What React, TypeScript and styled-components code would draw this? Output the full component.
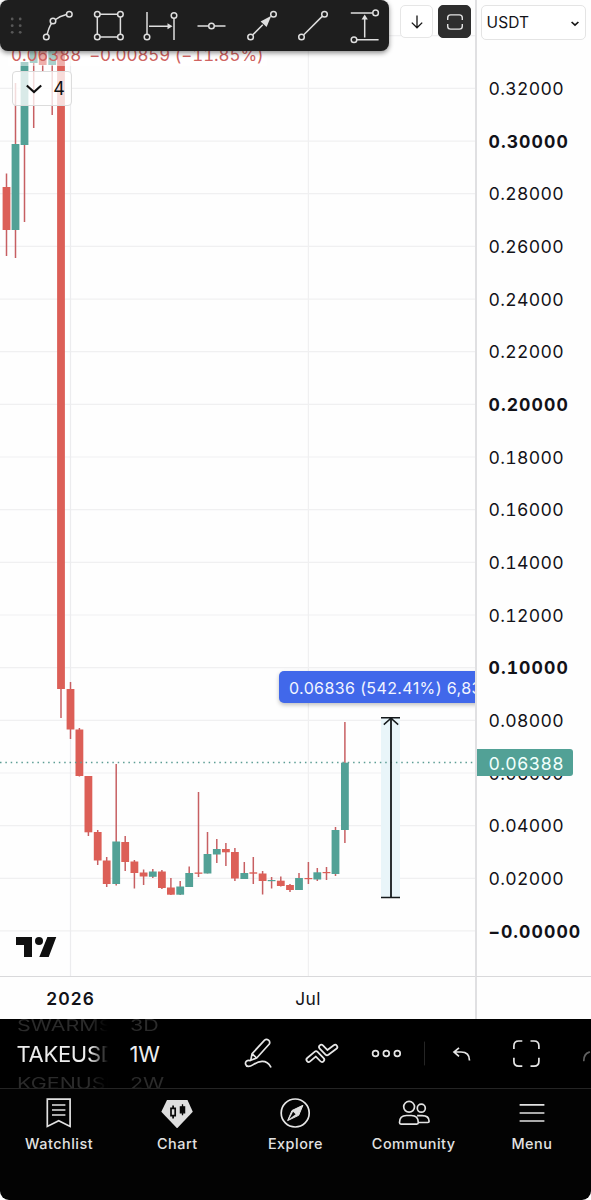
import React from 'react';
import styled, { createGlobalStyle, css } from 'styled-components';

const GlobalStyle = createGlobalStyle`
  *, *::before, *::after { box-sizing: border-box; }
  body { margin: 0; background: #fff; font-family: Inter, "Liberation Sans", sans-serif; }
`;

const TEAL = '#52a196';
const RED = '#dc5f57';
const WICK = '#c75f62';

const Screen = styled.main`
  width: 591px;
  height: 1200px;
  display: flex;
  flex-direction: column;
  overflow: hidden;
  background: #fff;
`;

const ChartArea = styled.section`
  display: grid;
  grid-template-columns: 475px 116px;
  grid-template-rows: 976px 43px;
  height: 1019px;
  background: #fefefe;
`;

const Pane = styled.div`
  position: relative;
  overflow: hidden;
`;

const Plot = styled.svg`
  display: block;
`;

const LegendValues = styled.div`
  position: absolute;
  top: 44px;
  left: 8px;
  height: 22px;
  padding: 0 3px;
  display: flex;
  gap: 8px;
  align-items: center;
  background: rgba(255, 255, 255, 0.5);
  color: #cf6361;
  font-size: 17px;
  font-variant-numeric: tabular-nums;
  letter-spacing: -0.08px;
  white-space: nowrap;
`;

const LegendToggle = styled.button`
  position: absolute;
  top: 71px;
  left: 12px;
  width: 60px;
  height: 35px;
  padding: 0 6px 0 13px;
  display: flex;
  align-items: center;
  justify-content: space-between;
  border: 1px solid #dcdcdc;
  border-radius: 4px;
  background: rgba(255, 255, 255, 0.78);
  color: #0f0f0f;
  font: 400 18px Inter, sans-serif;
`;

const DrawingBar = styled.div`
  position: absolute;
  z-index: 2;
  top: 0;
  left: 0;
  width: 389px;
  height: 51px;
  border-radius: 8px;
  background: #1e1e1e;
  box-shadow: 0 2px 5px rgba(0, 0, 0, 0.45);
`;

const PaneButtons = styled.div`
  position: absolute;
  top: 5px;
  right: 4px;
  display: flex;
  gap: 5px;
`;

const PaneButton = styled.button<{ $dark?: boolean }>`
  width: 33px;
  height: 33px;
  padding: 0;
  display: grid;
  place-items: center;
  border-radius: 5px;
  border: 1px solid ${p => (p.$dark ? '#2e2e2e' : '#e6e6e6')};
  background: ${p => (p.$dark ? '#2e2e2e' : '#fff')};
  color: ${p => (p.$dark ? '#e4e4e4' : '#151515')};
`;

const RangeTag = styled.div`
  position: absolute;
  top: 671px;
  left: 279px;
  width: 240px;
  height: 32px;
  padding: 1px 0 0 10px;
  display: flex;
  align-items: center;
  border-radius: 5px;
  background: #4168ea;
  box-shadow: 0 2px 4px rgba(0, 0, 0, 0.25);
  color: #f2f5ff;
  font-size: 16px;
  letter-spacing: 0.38px;
  white-space: nowrap;
`;

const BrandMark = styled.svg`
  position: absolute;
  left: 16px;
  top: 937px;
`;

const PriceScale = styled.div`
  position: relative;
  padding-top: 62.3px;
  border-left: 2px solid #e0e0e2;
  font-size: 17.6px;
  font-variant-numeric: tabular-nums;
  letter-spacing: 0.32px;
`;

const PriceLabel = styled.div<{ $strong: boolean }>`
  height: 52.66px;
  padding-left: 11.5px;
  display: flex;
  align-items: center;
  color: #121218;
  font-weight: ${p => (p.$strong ? 700 : 400)};
  letter-spacing: ${p => (p.$strong ? '1.05px' : 'inherit')};
  white-space: nowrap;
`;

const LastPrice = styled.div`
  position: absolute;
  top: 749px;
  left: 0;
  width: 96px;
  height: 27px;
  padding: 1px 0 0 11.5px;
  display: flex;
  align-items: center;
  border-radius: 0 3px 3px 0;
  background: ${TEAL};
  color: #f1fffc;
`;

const CurrencySelect = styled.button`
  position: absolute;
  top: 5px;
  left: 4px;
  width: 105px;
  height: 35px;
  padding: 0 6px 0 4.5px;
  display: flex;
  align-items: center;
  justify-content: space-between;
  border: 1px solid #e4e4e4;
  border-radius: 5px;
  background: #fff;
  color: #141418;
  font: 400 15.5px Inter, sans-serif;
  letter-spacing: 0.1px;

  svg {
    margin-top: 2px;
  }
`;

const TimeAxis = styled.div`
  position: relative;
  border-top: 1px solid #d9d9db;
`;

const TimeLabel = styled.span<{ $x: number; $strong?: boolean }>`
  position: absolute;
  left: ${p => p.$x}px;
  top: 11.5px;
  transform: translateX(-50%);
  color: #121218;
  font-size: 17.4px;
  line-height: 20px;
  font-weight: ${p => (p.$strong ? 600 : 400)};
  letter-spacing: ${p => (p.$strong ? '1.1px' : '0.3px')};
`;

const ScaleCorner = styled.div`
  border-left: 2px solid #e0e0e2;
  border-top: 1px solid #d9d9db;
`;

const Footer = styled.footer`
  flex: 1;
  display: flex;
  flex-direction: column;
  background: #fff;
`;

const SymbolBar = styled.div`
  height: 70px;
  display: flex;
  align-items: stretch;
  border-bottom: 1px solid #242424;
  background: #000;
`;

const Wheel = styled.div<{ $width: number; $fade?: boolean }>`
  width: ${p => p.$width}px;
  height: 69px;
  overflow: hidden;
  display: flex;
  flex-direction: column;
  justify-content: center;
  ${p =>
    p.$fade &&
    css`
      mask-image: linear-gradient(to right, #000 73px, transparent 91px);
    `}
`;

const WheelItem = styled.div<{ $active?: boolean }>`
  flex: none;
  height: ${p => (p.$active ? 36 : 22)}px;
  line-height: ${p => (p.$active ? 37 : 23)}px;
  color: ${p => (p.$active ? '#ededed' : '#2b2b2b')};
  font-size: ${p => (p.$active ? 22 : 19)}px;
  letter-spacing: ${p => (p.$active ? '-0.3px' : '0')};
  white-space: nowrap;
  transform-origin: 0 50%;
  transform: ${p => (p.$active ? 'none' : 'scale(1.13, 0.8)')};
`;

const SymbolWheels = styled.div`
  display: flex;
  padding-left: 16.5px;
  gap: 21px;
  width: 226px;
`;

const Tools = styled.svg`
  display: block;
`;

const NavBar = styled.nav`
  flex: 1;
  display: flex;
  border-radius: 0 0 9px 9px;
  background: #030303;
`;

const NavItem = styled.a`
  flex: 1;
  padding-top: 7px;
  display: flex;
  flex-direction: column;
  align-items: center;
  gap: 6px;
  color: #e2e2e2;
  font-size: 14.4px;
  font-weight: 500;
  line-height: 20px;
  letter-spacing: 0.5px;
`;

const prices = [
  '0.32000', '0.30000', '0.28000', '0.26000', '0.24000', '0.22000', '0.20000', '0.18000', '0.16000',
  '0.14000', '0.12000', '0.10000', '0.08000', '0.06000', '0.04000', '0.02000', '−0.00000',
];
const strongPrices = new Set(['0.30000', '0.20000', '0.10000', '−0.00000']);

// [centre x, body top, body bottom, wick top, wick bottom, rising]
type Candle = [number, number, number, number, number, boolean];
const candles: Candle[] = [
  [6.5, 187, 230, 173.5, 256, false],
  [15.5, 144, 230, 83, 258, true],
  [24.5, 62, 145, 62, 222, true],
  [33.7, 40, 63, 40, 128, true],
  [42.7, 40, 65, 40, 72, false],
  [52.2, 40, 65, 40, 115, true],
  [61, 40, 689, 40, 718, false],
  [70.5, 689, 729.5, 682, 739, false],
  [79.4, 729.5, 776, 728, 776.5, false],
  [88.4, 776, 832.3, 776, 836, false],
  [97.7, 832, 860.5, 830, 865, false],
  [106.7, 860.5, 884, 857, 887, false],
  [116.2, 841.5, 884, 764, 885.5, true],
  [125.2, 842, 862, 836, 871, false],
  [134.4, 861.5, 873, 860, 888.5, false],
  [143.6, 872.5, 876.5, 869.5, 885, false],
  [152.8, 871.5, 876.8, 869, 878, true],
  [161.9, 871.5, 888, 870, 889, false],
  [170.9, 887.5, 894.7, 878, 895, false],
  [180.2, 886.5, 894.7, 881, 895, true],
  [189.2, 873, 887, 866.5, 887, true],
  [198.5, 872.5, 873.8, 792, 877, false],
  [207.5, 854, 873.5, 832, 873.5, true],
  [216.8, 849, 854.5, 839, 863, true],
  [225.9, 849, 852.3, 843, 866, false],
  [234.9, 852, 878.5, 848, 881, false],
  [244.3, 873, 879, 862, 879, true],
  [253.3, 872.3, 873.7, 857, 884, false],
  [262.6, 873.5, 881, 871, 894.5, false],
  [271.6, 880, 881.2, 877, 888.5, true],
  [280.8, 880.7, 886, 876.5, 886.5, false],
  [290, 885, 890, 884, 892, false],
  [299, 878, 890, 873, 890, true],
  [308.4, 878, 879.2, 862, 884, false],
  [317.3, 872.3, 879.5, 868, 881, true],
  [326.5, 872, 873.2, 867, 880, false],
  [335.5, 830, 874, 827, 876, true],
  [344.9, 762.7, 830, 722, 843, true],
];

const Chart = () => (
  <Plot width="475" height="976" viewBox="0 0 475 976">
    <g stroke="#f0f0f1" strokeWidth="1.2">
      {[35.7, ...prices.map((_, i) => 88.4 + i * 52.66)].map(y => (
        <line key={y} x1="0" x2="475" y1={y} y2={y} />
      ))}
      <line x1="70.5" x2="70.5" y1="0" y2="976" stroke="#ececee" />
      <line x1="308.4" x2="308.4" y1="0" y2="976" />
    </g>
    <rect x="381" y="717.5" width="19" height="180" fill="#e9f5f9" />
    {candles.map(([x, top, bottom, high, low, up]) => (
      <g key={x}>
        <line x1={x} x2={x} y1={high} y2={low} stroke={WICK} strokeWidth="1.5" />
        <rect x={x - 3.9} y={top} width="7.8" height={bottom - top} fill={up ? TEAL : RED} />
      </g>
    ))}
    <line x1="0" x2="475" y1="762.6" y2="762.6" stroke="#5c9d94" strokeWidth="1.5" strokeDasharray="1.5 3.85" />
    <g fill="none" stroke="#15191b" strokeWidth="1.5">
      <path d="M381 717.7h19M381 897.6h19M383.8 724.6l7.2-6.4 7.2 6.4" />
      <path d="M391 718v179" strokeWidth="1.8" />
    </g>
  </Plot>
);

const DrawingIcons = () => (
  <svg width="389" height="51" fill="none" stroke="#dedede" strokeWidth="1.5">
    <g fill="#585858" stroke="none">
      {[19, 25.7, 32.3].map(y => (
        <g key={y}>
          <circle cx="12.2" cy={y} r="1.4" />
          <circle cx="20.2" cy={y} r="1.4" />
        </g>
      ))}
    </g>
    <path d="M47.2 34.3Q49 27 51.6 23.4M55.6 19.5Q60 16.2 66.5 14.6" />
    <path d="M100 14.2h17.5M100 37h17.5M97.3 17v17.3M120.4 17v17.3" />
    <path d="M147 12v22M174 18v22M149 26.2h19" />
    <path d="M167.5 23.2l5 3-5 3z" fill="#dedede" stroke="none" />
    <path d="M197.5 26h11M214.5 26h11" />
    <path d="M252.8 34.8l10-10" />
    <path d="M271.3 15.8L260.6 21.6 266.6 27z" fill="#dedede" stroke="none" />
    <path d="M303.8 34.8l18.4-18.4" />
    <path d="M350.8 12.9h22M356.8 39.7h21.8M364.7 18v19.5" />
    <path d="M361.6 19.5l3.1-5 3.1 5z" fill="#dedede" stroke="none" />
    <g fill="#1e1e1e">
      {[
        [46.3, 37], [53, 21], [69.3, 14.2], [97.3, 14.2], [120.4, 14.2], [97.3, 37], [120.4, 37],
        [147, 37], [174, 15.5], [211.5, 26], [250.6, 37], [273.5, 14.2], [301.5, 37], [324.5, 14.2],
        [375.6, 12.9], [354, 39.7],
      ].map(([x, y]) => (
        <circle key={`${x}-${y}`} cx={x} cy={y} r="2.8" />
      ))}
    </g>
  </svg>
);

const CHEVRONS = 'M308.7 1059.7l7.3-6.2 6 6.2M321.3 1047l5.8 6 8-6';

const ToolIcons = () => (
  <Tools width="365" height="69" viewBox="226 1019 365 69" fill="none" stroke="#e6e6e6" strokeWidth="1.7" strokeLinecap="round" strokeLinejoin="round">
    <path d="M250.8 1060.2l1.2-6.4 12.6-13.7q1.8-1.6 3.9.1t.6 4.1l-12.4 13.7zM252.2 1053.8l4.4 4.2" />
    <path d="M250.2 1060.6c-3.2-.8-5.2 1.2-4.6 3.6.7 2.8 4 2.8 7.2.7 5.3-3.5 13.3-6.5 17.9 2" />
    <path d={CHEVRONS} strokeWidth="6.2" />
    <path d={CHEVRONS} stroke="#000" strokeWidth="2.7" />
    <circle cx="375.5" cy="1053.5" r="2.9" />
    <circle cx="386.3" cy="1053.5" r="2.9" />
    <circle cx="397.3" cy="1053.5" r="2.9" />
    <path d="M424.5 1042v23" stroke="#252525" strokeWidth="1" />
    <path d="M459 1047.8l-5 4.2 5 4.3M454.5 1052h6.5c5.3 0 8.5 3 8.5 8.4" strokeLinecap="butt" strokeLinejoin="miter" />
    <path d="M522.3 1041h-3.5q-4.9 0-4.9 4.9v3.2M530.5 1041h3.5q4.9 0 4.9 4.9v3.2M513.9 1057.8v3.4q0 4.9 4.9 4.9h3.5M538.9 1057.8v3.4q0 4.9-4.9 4.9h-3.5" strokeLinecap="butt" />
    <path d="M583.8 1060.5q0-6.5 5.5-8.4" stroke="#626262" />
  </Tools>
);

const navIcon = {
  Watchlist: (
    <svg width="32" height="32" fill="none" stroke="#e2e2e2" strokeWidth="1.7">
      <path d="M4.3 3.2h22.8v27.2l-11.4-5.6-11.4 5.6zM9 9h13.4M9 14h13.4M9 19h13.4" />
    </svg>
  ),
  Chart: (
    <svg width="32" height="32">
      <path d="M6 4h20.5l5.3 12L16.1 33 .3 16z" fill="#dedede" transform="scale(1 .98)" />
      <path d="M10 12.3h4.2v7.4H10zM12.1 9.4v2.9M12.1 19.7v2.9" fill="#dedede" stroke="#060606" strokeWidth="1.7" />
      <path d="M19.4 10.8h4.2v6h-4.2zM21.5 8.2v11" fill="#060606" stroke="#060606" strokeWidth="1.3" />
    </svg>
  ),
  Explore: (
    <svg width="32" height="32" fill="none" stroke="#e6e6e6" strokeWidth="1.7">
      <g transform="translate(-.8 0)">
        <circle cx="16" cy="17" r="14" />
        <path d="M23.7 9.3l-4.2 10L8.4 24.6l4.4-10.1z" fill="#dedede" strokeWidth="1" />
        <path d="M10.1 22.9l3.8-7.2 2.5 2.6z" fill="#050505" stroke="none" />
      </g>
    </svg>
  ),
  Community: (
    <svg width="32" height="32" fill="none" stroke="#e2e2e2" strokeWidth="1.7">
      <g transform="translate(-.5 0)">
        <circle cx="11.6" cy="10.8" r="5.4" />
        <circle cx="23.8" cy="12.2" r="4" />
        <path d="M2 26.6c0-4.6 2.8-7.1 7-7.1h4.8c4.2 0 7 2.5 7 7.1 0 .9-.6 1.5-1.5 1.5H3.5c-.9 0-1.5-.6-1.5-1.5zM19.6 19.6h5c4.4 0 7 2.2 7 5.6 0 .8-.5 1.3-1.3 1.3h-9.5" />
      </g>
    </svg>
  ),
  Menu: (
    <svg width="32" height="32" stroke="#e2e2e2" strokeWidth="1.7">
      <path d="M3.6 8.8h24.8M3.6 17h24.8M3.6 25h24.8" />
    </svg>
  ),
};

export default function App() {
  return (
    <>
      <GlobalStyle />
      <Screen>
        <ChartArea>
          <Pane>
            <Chart />
            <LegendValues>
              <span>0.06388</span>
              <span>−0.00859 (−11.85%)</span>
            </LegendValues>
            <LegendToggle>
              <svg width="16" height="10" fill="none" stroke="#0f0f0f" strokeWidth="2.1">
                <path d="M.8 1.4L8 8l7.2-6.6" />
              </svg>
              4
            </LegendToggle>
            <RangeTag>0.06836 (542.41%) 6,836</RangeTag>
            <BrandMark width="41" height="21" fill="#101010">
              <path d="M0 0h16v20H8V8H0zM31.4 0H40.3l-7.6 20h-9.4z" />
              <circle cx="23" cy="4" r="4" />
            </BrandMark>
            <PaneButtons>
              <PaneButton>
                <svg width="16" height="16" fill="none" stroke="currentColor" strokeWidth="1.3">
                  <path d="M8 1.5v12.3M2.8 8.6L8 13.8l5.2-5.2" />
                </svg>
              </PaneButton>
              <PaneButton $dark>
                <svg width="18" height="18" fill="none" stroke="currentColor" strokeWidth="1.4">
                  <path d="M1.7 7V4.8q0-2.9 2.9-2.9h8.8q2.9 0 2.9 2.9V7M1.7 11v2.2q0 2.9 2.9 2.9h8.8q2.9 0 2.9-2.9V11" />
                </svg>
              </PaneButton>
            </PaneButtons>
            <DrawingBar>
              <DrawingIcons />
            </DrawingBar>
          </Pane>
          <PriceScale>
            {prices.map(p => (
              <PriceLabel key={p} $strong={strongPrices.has(p)}>{p}</PriceLabel>
            ))}
            <LastPrice>0.06388</LastPrice>
            <CurrencySelect>
              USDT
              <svg width="8" height="6" fill="none" stroke="#151515" strokeWidth="1.7">
                <path d="M.6 1L4 4.2 7.4 1" />
              </svg>
            </CurrencySelect>
          </PriceScale>
          <TimeAxis>
            <TimeLabel $x={70.7} $strong>2026</TimeLabel>
            <TimeLabel $x={308}>Jul</TimeLabel>
          </TimeAxis>
          <ScaleCorner />
        </ChartArea>
        <Footer>
          <SymbolBar>
            <SymbolWheels>
              <Wheel $width={92} $fade>
                <WheelItem>SWARMS</WheelItem>
                <WheelItem $active>TAKEUSDT</WheelItem>
                <WheelItem>KGENUSDT</WheelItem>
              </Wheel>
              <Wheel $width={60}>
                <WheelItem>3D</WheelItem>
                <WheelItem $active>1W</WheelItem>
                <WheelItem>2W</WheelItem>
              </Wheel>
            </SymbolWheels>
            <ToolIcons />
          </SymbolBar>
          <NavBar>
            {Object.entries(navIcon).map(([label, icon]) => (
              <NavItem key={label}>
                {icon}
                {label}
              </NavItem>
            ))}
          </NavBar>
        </Footer>
      </Screen>
    </>
  );
}
